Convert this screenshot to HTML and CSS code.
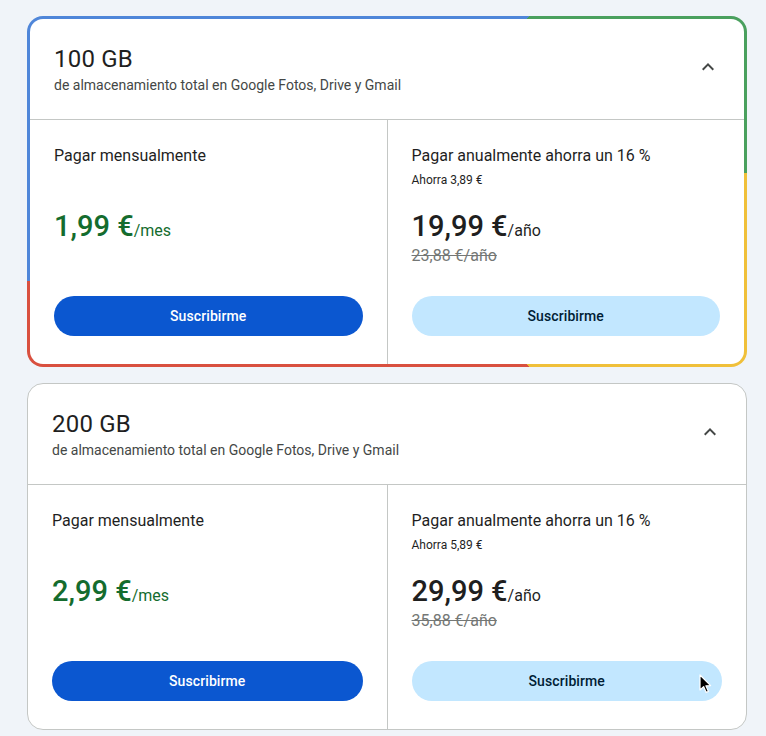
FILE: index.html
```html
<!DOCTYPE html>
<html lang="es">
<head>
<meta charset="utf-8">
<title>Planes</title>
<link rel="stylesheet" href="styles.css">
</head>
<body>
<div class="page">
  <section class="plan plan-featured">
    <div class="plan-head">
      <div class="plan-titles">
        <div class="plan-size">100 GB</div>
        <div class="plan-desc">de almacenamiento total en Google Fotos, Drive y Gmail</div>
      </div>
      <svg class="chevron" viewBox="0 0 24 24" width="24" height="24"><path d="M12 8l-6 6 1.41 1.41L12 10.83l4.59 4.58L18 14z"/></svg>
    </div>
    <div class="plan-body">
      <div class="option">
        <div class="opt-title">Pagar mensualmente</div>
        <div class="opt-save opt-save-empty">&nbsp;</div>
        <div class="price price-green">1,99 €<span class="per">/mes</span></div>
        <button class="btn btn-filled">Suscribirme</button>
      </div>
      <div class="option option-right">
        <div class="opt-title">Pagar anualmente ahorra un 16 %</div>
        <div class="opt-save">Ahorra 3,89 €</div>
        <div class="price">19,99 €<span class="per">/año</span></div>
        <div class="old-price">23,88 €/año</div>
        <button class="btn btn-tonal">Suscribirme</button>
      </div>
    </div>
  </section>

  <section class="plan plan-plain">
    <div class="plan-head">
      <div class="plan-titles">
        <div class="plan-size">200 GB</div>
        <div class="plan-desc">de almacenamiento total en Google Fotos, Drive y Gmail</div>
      </div>
      <svg class="chevron" viewBox="0 0 24 24" width="24" height="24"><path d="M12 8l-6 6 1.41 1.41L12 10.83l4.59 4.58L18 14z"/></svg>
    </div>
    <div class="plan-body">
      <div class="option">
        <div class="opt-title">Pagar mensualmente</div>
        <div class="opt-save opt-save-empty">&nbsp;</div>
        <div class="price price-green">2,99 €<span class="per">/mes</span></div>
        <button class="btn btn-filled">Suscribirme</button>
      </div>
      <div class="option option-right">
        <div class="opt-title">Pagar anualmente ahorra un 16 %</div>
        <div class="opt-save">Ahorra 5,89 €</div>
        <div class="price">29,99 €<span class="per">/año</span></div>
        <div class="old-price">35,88 €/año</div>
        <button class="btn btn-tonal">Suscribirme</button>
      </div>
    </div>
    <svg class="cursor" viewBox="0 0 13 20" width="13" height="20"><path d="M1 1 L1 16 L4.6 12.6 L7.2 18.4 L9.4 17.4 L6.9 11.8 L11.6 11.6 Z" fill="#000" stroke="#fff" stroke-width="1.2" stroke-linejoin="round"/></svg>
  </section>
</div>
</body>
</html>
```

FILE: styles.css
```css
* { box-sizing: border-box; }

html, body {
  margin: 0;
  padding: 0;
  background: #f0f4f9;
}

body {
  font-family: Roboto, "Liberation Sans", Arial, sans-serif;
  color: #1f1f1f;
}

.page {
  width: 720px;
  margin-left: 27px;
  padding-top: 16px;
  display: flex;
  flex-direction: column;
  gap: 16px;
}

.plan {
  position: relative;
  border-radius: 16px;
  background: #fff;
}

.plan-featured {
  border: 3px solid transparent;
  background:
    linear-gradient(#fff, #fff) padding-box,
    conic-gradient(#4f86d9 0deg 39deg, #4aa05e 39deg 87deg, #f0c03a 87deg 141deg, #d9503f 141deg 256deg, #4f86d9 256deg 360deg) border-box;
}

.plan-plain {
  border: 1px solid #c4c7c5;
}

.plan-head {
  display: flex;
  align-items: center;
  justify-content: space-between;
  padding: 24px;
  border-bottom: 1px solid #c4c7c5;
}

.plan-size {
  font-size: 24px;
  line-height: 32px;
  letter-spacing: 0.2px;
  color: #1f1f1f;
}

.plan-desc {
  font-size: 14px;
  line-height: 20px;
  color: #444746;
}

.chevron {
  fill: #444746;
  margin-top: -4px;
}

.plan-body {
  display: flex;
}

.option {
  flex: 1 1 0;
  display: flex;
  flex-direction: column;
  padding: 24px 24px 28px;
}

.option-right {
  border-left: 1px solid #c4c7c5;
}

.opt-title {
  font-size: 16px;
  line-height: 24px;
  color: #1f1f1f;
}

.opt-save {
  font-size: 12px;
  line-height: 20px;
  color: #1f1f1f;
  margin-top: 2px;
  height: 20px;
}

.opt-save-empty { visibility: hidden; }

.price {
  margin-top: 18px;
  font-size: 29px;
  font-weight: 500;
  line-height: 36px;
  height: 36px;
  color: #1f1f1f;
  white-space: nowrap;
}

.price-green { color: #146c2e; }

.per {
  font-size: 16px;
  font-weight: 400;
  line-height: 0;
}

.old-price {
  margin-top: 2px;
  font-size: 16px;
  line-height: 20px;
  height: 20px;
  color: #747775;
  text-decoration: line-through;
}

.btn {
  flex: none;
  margin-top: auto;
  height: 40px;
  border: none;
  border-radius: 20px;
  font-family: Roboto, "Liberation Sans", Arial, sans-serif;
  font-size: 14px;
  font-weight: 500;
  letter-spacing: 0.1px;
  cursor: pointer;
}

.btn-filled {
  background: #0b57d0;
  color: #fff;
}

.btn-tonal {
  background: #c2e7ff;
  color: #001d35;
}

.option-right .old-price + .btn { margin-top: 30px; }

.cursor {
  position: absolute;
  left: 671px;
  top: 290px;
}
```
